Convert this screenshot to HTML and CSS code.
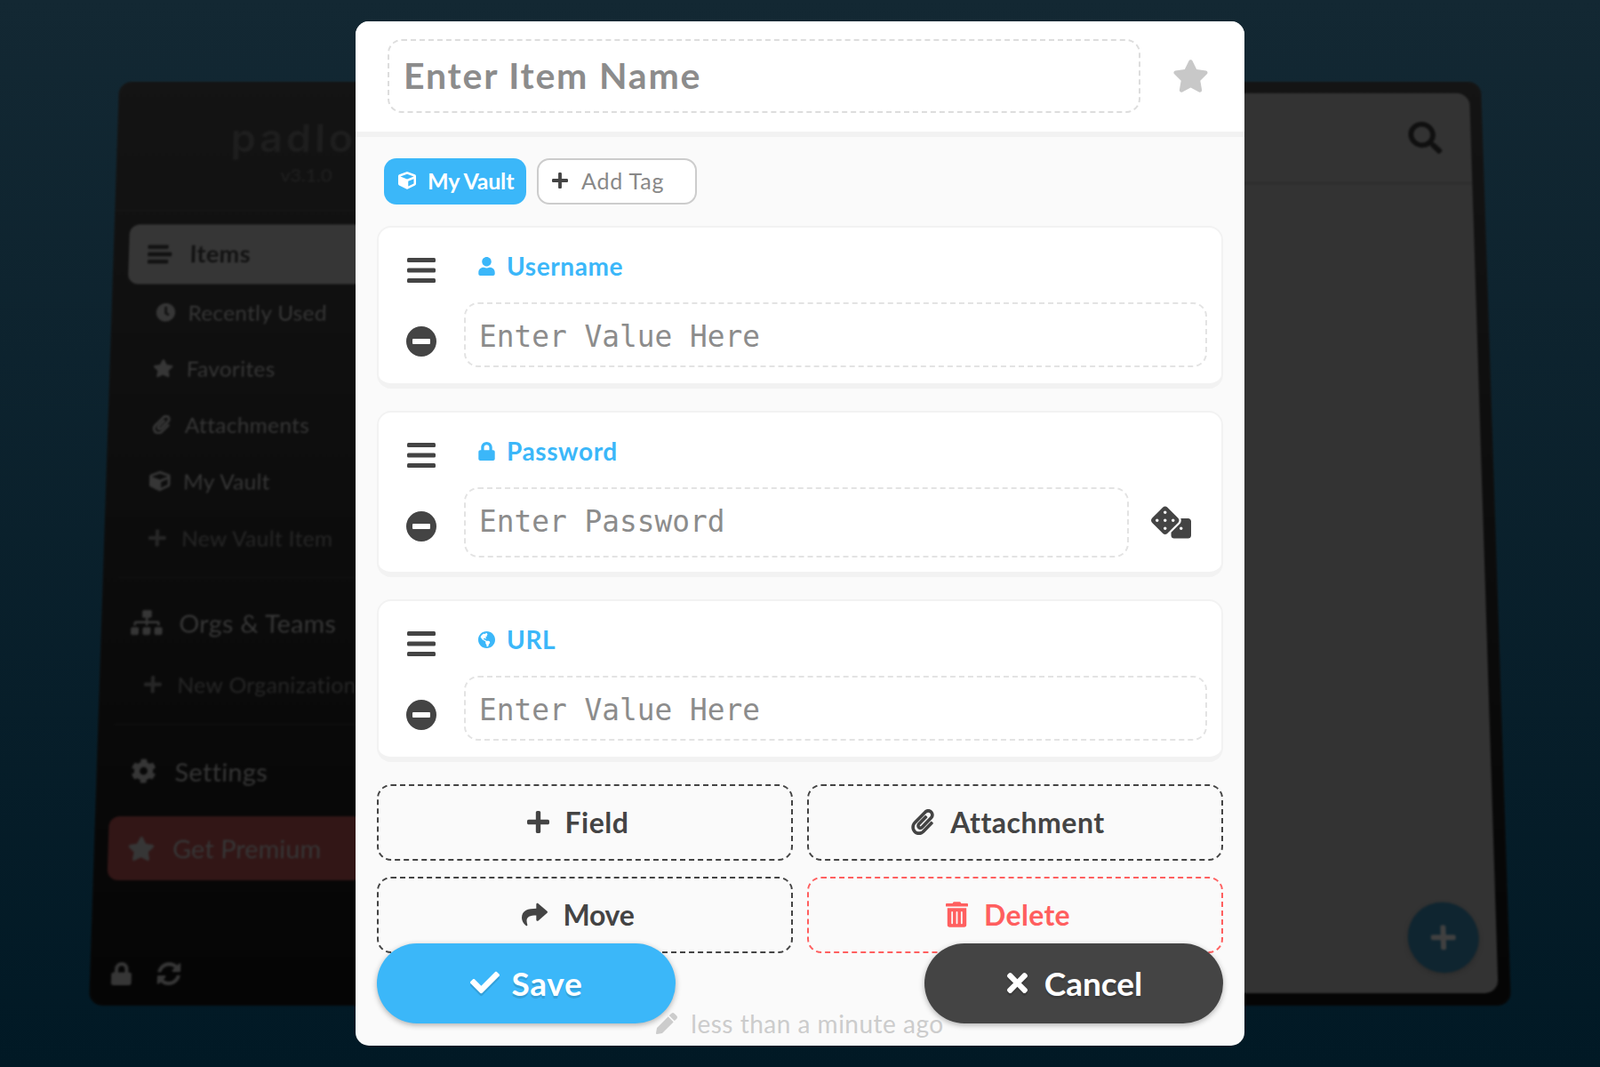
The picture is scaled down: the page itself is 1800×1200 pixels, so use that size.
FILE: index.html
```html
<!DOCTYPE html>
<html lang="en">
<head>
    <meta charset="UTF-8">
    <meta name="viewport" content="width=device-width, initial-scale=1.0">
    <title>Padloc</title>
    <link rel="stylesheet" href="styles.css">
</head>
<body>

<svg class="sprite" aria-hidden="true">
    <symbol id="i-star" viewBox="0 0 576 512"><path d="M259.3 17.8L194 150.2 47.9 171.5c-26.2 3.8-36.7 36.1-17.7 54.6l105.7 103-25 145.5c-4.5 26.3 23.2 46 46.4 33.7L288 439.6l130.7 68.7c23.2 12.2 50.9-7.4 46.4-33.7l-25-145.5 105.7-103c19-18.5 8.5-50.8-17.7-54.6L382 150.2 316.7 17.8c-11.7-23.6-45.6-23.9-57.4 0z"/></symbol>
    <symbol id="i-search" viewBox="0 0 512 512"><path d="M505 442.7L405.3 343c-4.5-4.5-10.6-7-17-7H372c27.6-35.3 44-79.7 44-128C416 93.1 322.9 0 208 0S0 93.1 0 208s93.1 208 208 208c48.3 0 92.7-16.4 128-44v16.3c0 6.4 2.5 12.5 7 17l99.7 99.7c9.4 9.4 24.6 9.4 33.9 0l28.3-28.3c9.4-9.4 9.4-24.6.1-34zM208 336c-70.7 0-128-57.2-128-128 0-70.7 57.2-128 128-128 70.7 0 128 57.2 128 128 0 70.7-57.2 128-128 128z"/></symbol>
    <symbol id="i-plus" viewBox="0 0 448 448"><path d="M416 176H272V32c0-17.67-14.33-32-32-32h-32c-17.67 0-32 14.33-32 32v144H32c-17.67 0-32 14.33-32 32v32c0 17.67 14.33 32 32 32h144v144c0 17.67 14.33 32 32 32h32c17.67 0 32-14.33 32-32V272h144c17.67 0 32-14.33 32-32v-32c0-17.67-14.33-32-32-32z"/></symbol>
    <symbol id="i-user" viewBox="0 0 448 512"><path d="M224 256c70.7 0 128-57.3 128-128S294.7 0 224 0 96 57.3 96 128s57.3 128 128 128zm89.6 32h-16.7c-22.2 10.2-46.9 16-72.9 16s-50.6-5.8-72.9-16h-16.7C60.2 288 0 348.2 0 422.4V464c0 26.5 21.5 48 48 48h352c26.5 0 48-21.5 48-48v-41.6c0-74.2-60.2-134.4-134.4-134.4z"/></symbol>
    <symbol id="i-lock" viewBox="0 0 448 512"><path d="M400 224h-24v-72C376 68.2 307.8 0 224 0S72 68.2 72 152v72H48c-26.5 0-48 21.5-48 48v192c0 26.5 21.5 48 48 48h352c26.5 0 48-21.5 48-48V272c0-26.5-21.5-48-48-48zm-104 0H152v-72c0-39.7 32.3-72 72-72s72 32.3 72 72v72z"/></symbol>
    <symbol id="i-times" viewBox="0 0 352 352"><path d="M242.72 176l100.07-100.07c12.28-12.28 12.28-32.19 0-44.48l-22.24-22.24c-12.28-12.28-32.19-12.28-44.48 0L176 109.28 75.93 9.21c-12.28-12.28-32.19-12.28-44.48 0L9.21 31.45c-12.28 12.28-12.28 32.19 0 44.48L109.28 176 9.21 276.07c-12.28 12.28-12.28 32.19 0 44.48l22.24 22.24c12.28 12.28 32.2 12.28 44.48 0L176 242.72l100.07 100.07c12.28 12.28 32.2 12.28 44.48 0l22.24-22.24c12.28-12.28 12.28-32.19 0-44.48L242.72 176z"/></symbol>
    <symbol id="i-check" viewBox="0 64 512 384"><path d="M173.898 439.404l-166.4-166.4c-9.997-9.997-9.997-26.206 0-36.204l36.203-36.204c9.997-9.998 26.207-9.998 36.204 0L192 312.69 432.095 72.596c9.997-9.997 26.207-9.997 36.204 0l36.203 36.204c9.997 9.997 9.997 26.206 0 36.204l-294.4 294.401c-9.998 9.997-26.207 9.997-36.204-.001z"/></symbol>
    <symbol id="i-share" viewBox="0 0 512 512"><path d="M503.691 189.836L327.687 37.851C312.281 24.546 288 35.347 288 56.015v80.053C127.371 137.907 0 170.1 0 322.326c0 61.441 39.581 122.309 83.333 154.132 13.653 9.931 33.111-2.533 28.077-18.631C66.066 312.814 132.917 274.316 288 272.085V360c0 20.7 24.3 31.453 39.687 18.164l176.004-152c11.071-9.562 11.086-26.753 0-36.328z"/></symbol>
    <symbol id="i-trash" viewBox="0 0 448 512"><path d="M32 464a48 48 0 0 0 48 48h288a48 48 0 0 0 48-48V128H32zm272-256a16 16 0 0 1 32 0v224a16 16 0 0 1-32 0zm-96 0a16 16 0 0 1 32 0v224a16 16 0 0 1-32 0zm-96 0a16 16 0 0 1 32 0v224a16 16 0 0 1-32 0zM432 32H312l-9.4-18.7A24 24 0 0 0 281.1 0H166.8a23.72 23.72 0 0 0-21.4 13.3L136 32H16A16 16 0 0 0 0 48v32a16 16 0 0 0 16 16h416a16 16 0 0 0 16-16V48a16 16 0 0 0-16-16z"/></symbol>
    <symbol id="i-clip" viewBox="0 0 448 512"><path d="M43.246 466.142c-58.43-60.289-57.341-157.511 1.386-217.581L254.392 34c44.316-45.332 116.351-45.336 160.671 0 43.89 44.894 43.943 117.329 0 162.276L232.214 383.128c-29.855 30.537-78.633 30.111-107.982-.998-28.275-29.97-27.368-77.473 1.452-106.953l143.743-146.835c6.182-6.314 16.312-6.422 22.626-.241l22.861 22.379c6.315 6.182 6.422 16.312.241 22.626L171.427 319.927c-4.932 5.045-5.236 13.428-.648 18.292 4.372 4.634 11.245 4.711 15.688.165l182.849-186.851c19.613-20.062 19.613-52.725-.011-72.798-19.189-19.627-49.957-19.637-69.154 0L90.39 293.295c-34.763 35.56-35.299 93.12-1.191 128.313 34.01 35.093 88.985 35.137 123.058.286l172.06-175.999c6.177-6.319 16.307-6.433 22.626-.256l22.877 22.364c6.319 6.177 6.434 16.307.256 22.626l-172.06 175.998c-59.576 60.938-155.943 60.216-214.77-.485z"/></symbol>
    <symbol id="i-cube" viewBox="0 0 512 512"><path d="M239.1 6.3l-208 78c-18.7 7-31.1 25-31.1 45v225.1c0 18.2 10.3 34.8 26.5 42.9l208 104c13.5 6.8 29.4 6.8 42.9 0l208-104c16.3-8.1 26.5-24.8 26.5-42.9V129.3c0-20-12.4-37.9-31.1-44.9l-208-78C262 2.2 250 2.2 239.1 6.3zM256 68.4l192 72v1.1l-192 78-192-78v-1.1l192-72zm32 356V275.5l160-65v133.9l-160 80z"/></symbol>
    <symbol id="i-clock" viewBox="8 8 496 496"><path d="M256,8C119,8,8,119,8,256S119,504,256,504,504,393,504,256,393,8,256,8Zm92.49,313h0l-20,25a16,16,0,0,1-22.49,2.5h0l-67-49.72a40,40,0,0,1-15-31.23V112a16,16,0,0,1,16-16h32a16,16,0,0,1,16,16V256l58,42.5A16,16,0,0,1,348.49,321Z"/></symbol>
    <symbol id="i-sitemap" viewBox="0 0 640 512"><path d="M128 352H32c-17.67 0-32 14.33-32 32v96c0 17.67 14.33 32 32 32h96c17.67 0 32-14.33 32-32v-96c0-17.67-14.33-32-32-32zm-24-80h192v48h48v-48h192v48h48v-57.59c0-21.17-17.23-38.41-38.41-38.41H344v-64h40c17.67 0 32-14.33 32-32V32c0-17.67-14.33-32-32-32H256c-17.67 0-32 14.33-32 32v96c0 17.67 14.33 32 32 32h40v64H94.41C73.23 224 56 241.23 56 262.41V320h48v-48zm264 80h-96c-17.67 0-32 14.33-32 32v96c0 17.67 14.33 32 32 32h96c17.67 0 32-14.33 32-32v-96c0-17.67-14.33-32-32-32zm240 0h-96c-17.67 0-32 14.33-32 32v96c0 17.67 14.33 32 32 32h96c17.67 0 32-14.33 32-32v-96c0-17.67-14.33-32-32-32z"/></symbol>
    <symbol id="i-cog" viewBox="14 8 484 496"><path d="M487.4 315.7l-42.6-24.6c4.3-23.2 4.3-47 0-70.2l42.6-24.6c4.9-2.8 7.1-8.6 5.5-14-11.1-35.6-30-67.8-54.7-94.6-3.8-4.1-10-5.1-14.8-2.3L380.8 110c-17.9-15.4-38.5-27.3-60.8-35.1V25.8c0-5.6-3.9-10.5-9.4-11.7-36.7-8.2-74.3-7.8-109.2 0-5.5 1.2-9.4 6.1-9.4 11.7V75c-22.2 7.9-42.8 19.8-60.8 35.1L88.7 85.5c-4.9-2.8-11-1.9-14.8 2.3-24.7 26.7-43.6 58.9-54.7 94.6-1.7 5.4.6 11.2 5.5 14L67.3 221c-4.3 23.2-4.3 47 0 70.2l-42.6 24.6c-4.9 2.8-7.1 8.6-5.5 14 11.1 35.6 30 67.8 54.7 94.6 3.8 4.1 10 5.1 14.8 2.3l42.6-24.6c17.9 15.4 38.5 27.3 60.8 35.1v49.2c0 5.6 3.9 10.5 9.4 11.7 36.7 8.2 74.3 7.8 109.2 0 5.5-1.2 9.4-6.1 9.4-11.7v-49.2c22.2-7.9 42.8-19.8 60.8-35.1l42.6 24.6c4.9 2.8 11 1.9 14.8-2.3 24.7-26.7 43.6-58.9 54.7-94.6 1.5-5.5-.7-11.3-5.6-14.1zM256 336c-44.1 0-80-35.9-80-80s35.9-80 80-80 80 35.9 80 80-35.9 80-80 80z"/></symbol>
    <symbol id="i-sync" viewBox="8 8 496 496"><path d="M370.72 133.28C339.458 104.008 298.888 87.962 255.848 88c-77.458.068-144.328 53.178-162.791 126.85-1.344 5.363-6.122 9.15-11.651 9.15H24.103c-7.498 0-13.194-6.807-11.807-14.176C33.933 94.924 134.813 8 256 8c66.448 0 126.791 26.136 171.315 68.685L463.03 40.97C478.149 25.851 504 36.559 504 57.941V192c0 13.255-10.745 24-24 24H345.941c-21.382 0-32.09-25.851-16.971-40.971l41.75-41.749zM32 296h134.059c21.382 0 32.09 25.851 16.971 40.971l-41.75 41.75c31.262 29.273 71.835 45.319 114.876 45.28 77.418-.07 144.315-53.144 162.787-126.849 1.344-5.363 6.122-9.15 11.651-9.15h57.304c7.498 0 13.194 6.807 11.807 14.176C478.067 417.076 377.187 504 256 504c-66.448 0-126.791-26.136-171.315-68.685L48.97 471.03C33.851 486.149 8 475.441 8 454.059V320c0-13.255 10.745-24 24-24z"/></symbol>
    <symbol id="i-globe" viewBox="0 8 496 496"><path d="M248 8C111.03 8 0 119.03 0 256s111.03 248 248 248 248-111.03 248-248S384.97 8 248 8zm82.29 357.6c-3.9 3.88-7.99 7.95-11.31 11.28-2.99 3-5.1 6.7-6.17 10.71-1.51 5.66-2.73 11.38-4.77 16.87l-17.39 46.85c-13.76 3-28 4.69-42.65 4.69v-27.38c1.69-12.62-7.64-36.26-22.63-51.25-6-6-9.37-14.14-9.37-22.63v-32.01c0-11.64-6.27-22.34-16.46-27.97-14.37-7.95-34.81-19.06-48.81-26.11-11.48-5.78-22.1-13.14-31.65-21.75l-.8-.72a114.792 114.792 0 0 1-18.06-20.74c-9.38-13.77-24.66-36.42-34.59-51.14 20.47-45.5 57.36-82.04 103.2-101.89l24.01 12.01C203.48 89.74 216 82.01 216 70.11v-11.3c7.99-1.29 16.12-2.11 24.39-2.42l28.3 28.3c6.25 6.25 6.25 16.38 0 22.63L264 112l-10.34 10.34c-3.12 3.12-3.12 8.19 0 11.31l4.69 4.69c3.12 3.12 3.12 8.19 0 11.31l-8 8a8.008 8.008 0 0 1-5.66 2.34h-8.99c-2.08 0-4.08.81-5.58 2.27l-9.92 9.65a8.008 8.008 0 0 0-1.58 9.31l15.59 31.19c2.66 5.32-1.21 11.58-7.15 11.58h-5.64c-1.93 0-3.79-.7-5.24-1.96l-9.28-8.06a16.017 16.017 0 0 0-15.55-3.1l-31.17 10.39a11.95 11.95 0 0 0-8.17 11.34c0 4.53 2.56 8.66 6.61 10.69l11.08 5.54c9.41 4.71 19.79 7.16 30.31 7.16s22.59 27.29 32 32h66.75c8.49 0 16.62 3.37 22.63 9.37l13.69 13.69a30.503 30.503 0 0 1 8.93 21.57 46.536 46.536 0 0 1-13.72 32.98z"/></symbol>
    <symbol id="i-dice" viewBox="0 0 640 512"><path d="M592 192H473.26c12.69 29.59 7.12 65.2-17 89.32L320 417.58V464c0 26.51 21.49 48 48 48h224c26.51 0 48-21.49 48-48V240c0-26.51-21.49-48-48-48zM480 376c-13.25 0-24-10.75-24-24 0-13.26 10.75-24 24-24s24 10.74 24 24c0 13.25-10.75 24-24 24zm-46.37-186.7L258.7 14.37c-19.16-19.16-50.23-19.16-69.39 0L14.37 189.3c-19.16 19.16-19.16 50.23 0 69.39L189.3 433.63c19.16 19.16 50.23 19.16 69.39 0L433.63 258.7c19.16-19.17 19.16-50.24 0-69.4zM96 248c-13.25 0-24-10.75-24-24 0-13.26 10.75-24 24-24s24 10.74 24 24c0 13.25-10.75 24-24 24zm128 128c-13.25 0-24-10.75-24-24 0-13.26 10.75-24 24-24s24 10.74 24 24c0 13.25-10.75 24-24 24zm0-128c-13.25 0-24-10.75-24-24 0-13.26 10.75-24 24-24s24 10.74 24 24c0 13.25-10.75 24-24 24zm0-128c-13.25 0-24-10.75-24-24 0-13.26 10.75-24 24-24s24 10.74 24 24c0 13.25-10.75 24-24 24zm128 128c-13.25 0-24-10.75-24-24 0-13.26 10.75-24 24-24s24 10.74 24 24c0 13.25-10.75 24-24 24z"/></symbol>
    <symbol id="i-pencil" viewBox="0 0 512 512"><path d="M497.9 142.1l-46.1 46.1c-4.7 4.7-12.3 4.7-17 0l-111-111c-4.7-4.7-4.7-12.3 0-17l46.1-46.1c18.7-18.7 49.1-18.7 67.9 0l60.1 60.1c18.8 18.7 18.8 49.1 0 67.9zM284.2 99.8L21.6 362.4.4 483.9c-2.9 16.4 11.4 30.6 27.8 27.8l121.5-21.3 262.6-262.6c4.7-4.7 4.7-12.3 0-17l-111-111c-4.8-4.7-12.4-4.7-17.1 0z"/></symbol>
    <symbol id="i-bars" viewBox="0 0 32 28"><rect width="32" height="5" rx="1.5"/><rect y="11.5" width="32" height="5" rx="1.5"/><rect y="23" width="32" height="5" rx="1.5"/></symbol>
    <symbol id="i-list" viewBox="0 0 28 23"><rect width="24" height="5" rx="1"/><rect y="9" width="28" height="5" rx="1"/><rect y="18" width="24" height="5" rx="1"/></symbol>
    <symbol id="i-minus" viewBox="0 0 34 34"><path fill-rule="evenodd" d="M17 0a17 17 0 1 0 0 34a17 17 0 1 0 0-34zM8 14h18a1 1 0 0 1 1 1v4a1 1 0 0 1-1 1H8a1 1 0 0 1-1-1v-4a1 1 0 0 1 1-1z"/></symbol>
</svg>

<div class="app">
    <aside class="sidebar">
        <div class="logo">
            <div class="logo-name">padloc</div>
            <div class="logo-version">v3.1.0</div>
        </div>

        <div class="nav-row nav-active">
            <svg class="ico ico-items"><use href="#i-list"/></svg>
            <span>Items</span>
        </div>
        <div class="nav-row nav-sub">
            <svg class="ico ico-clock"><use href="#i-clock"/></svg>
            <span>Recently Used</span>
        </div>
        <div class="nav-row nav-sub">
            <svg class="ico ico-fav"><use href="#i-star"/></svg>
            <span>Favorites</span>
        </div>
        <div class="nav-row nav-sub">
            <svg class="ico ico-attach"><use href="#i-clip"/></svg>
            <span>Attachments</span>
        </div>
        <div class="nav-row nav-sub">
            <svg class="ico ico-vault"><use href="#i-cube"/></svg>
            <span>My Vault</span>
        </div>
        <div class="nav-row nav-sub nav-new">
            <svg class="ico ico-new"><use href="#i-plus"/></svg>
            <span>New Vault Item</span>
        </div>

        <div class="nav-sep"></div>

        <div class="nav-row nav-main">
            <svg class="ico ico-orgs"><use href="#i-sitemap"/></svg>
            <span>Orgs &amp; Teams</span>
        </div>
        <div class="nav-row nav-sub nav-new nav-org-new">
            <svg class="ico ico-new"><use href="#i-plus"/></svg>
            <span>New Organization</span>
        </div>

        <div class="nav-sep nav-sep-2"></div>

        <div class="nav-row nav-main">
            <svg class="ico ico-cog"><use href="#i-cog"/></svg>
            <span>Settings</span>
        </div>
        <div class="nav-row nav-main nav-premium">
            <svg class="ico ico-premium"><use href="#i-star"/></svg>
            <span>Get Premium</span>
        </div>

        <div class="side-foot">
            <svg class="ico-foot-lock"><use href="#i-lock"/></svg>
            <svg class="ico-foot-sync"><use href="#i-sync"/></svg>
        </div>
    </aside>

    <main class="panel">
        <div class="panel-head">
            <svg class="ico-search"><use href="#i-search"/></svg>
        </div>
        <div class="fab">
            <svg class="ico-fab"><use href="#i-plus"/></svg>
        </div>
    </main>
</div>

<div class="dialog">
    <header class="dialog-head">
        <input class="name-input" type="text" placeholder="Enter Item Name">
        <svg class="ico-star"><use href="#i-star"/></svg>
    </header>

    <div class="tags">
        <div class="tag tag-vault">
            <svg class="tag-ico"><use href="#i-cube"/></svg>
            <span>My Vault</span>
        </div>
        <div class="tag tag-add">
            <svg class="tag-plus"><use href="#i-plus"/></svg>
            <span>Add Tag</span>
        </div>
    </div>

    <section class="field">
        <div class="field-side">
            <svg class="ico-handle"><use href="#i-bars"/></svg>
        </div>
        <div class="field-label">
            <svg class="label-ico"><use href="#i-user"/></svg>
            <span>Username</span>
        </div>
        <div class="field-side">
            <svg class="ico-remove"><use href="#i-minus"/></svg>
        </div>
        <input class="value-input" type="text" placeholder="Enter Value Here">
    </section>

    <section class="field field-password">
        <div class="field-side">
            <svg class="ico-handle"><use href="#i-bars"/></svg>
        </div>
        <div class="field-label">
            <svg class="label-ico"><use href="#i-lock"/></svg>
            <span>Password</span>
        </div>
        <div class="field-side">
            <svg class="ico-remove"><use href="#i-minus"/></svg>
        </div>
        <div class="password-row">
            <input class="value-input" type="text" placeholder="Enter Password">
            <svg class="ico-dice"><use href="#i-dice"/></svg>
        </div>
    </section>

    <section class="field">
        <div class="field-side">
            <svg class="ico-handle"><use href="#i-bars"/></svg>
        </div>
        <div class="field-label">
            <svg class="label-ico"><use href="#i-globe"/></svg>
            <span>URL</span>
        </div>
        <div class="field-side">
            <svg class="ico-remove"><use href="#i-minus"/></svg>
        </div>
        <input class="value-input" type="text" placeholder="Enter Value Here">
    </section>

    <div class="actions">
        <button class="action" type="button">
            <svg class="action-ico ico-w25"><use href="#i-plus"/></svg>Field
        </button>
        <button class="action" type="button">
            <svg class="action-ico ico-w26"><use href="#i-clip"/></svg>Attachment
        </button>
        <button class="action action-move" type="button">
            <svg class="action-ico ico-w29"><use href="#i-share"/></svg>Move
        </button>
        <button class="action action-danger" type="button">
            <svg class="action-ico ico-w25"><use href="#i-trash"/></svg>Delete
        </button>
    </div>

    <div class="updated">
        <svg class="ico-pencil"><use href="#i-pencil"/></svg>
        <span>less than a minute ago</span>
    </div>

    <footer class="dialog-foot">
        <button class="pill pill-save" type="button">
            <svg class="pill-ico pill-check"><use href="#i-check"/></svg>Save
        </button>
        <button class="pill pill-cancel" type="button">
            <svg class="pill-ico pill-times"><use href="#i-times"/></svg>Cancel
        </button>
    </footer>
</div>

</body>
</html>
```

FILE: styles.css
```css
* {
    box-sizing: border-box;
}
html, body {
    height: 100%;
}
body {
    margin: 0;
    height: 1200px;
    overflow: hidden;
    padding: 45px 100px 69px;
    font-family: 'Lato', 'Noto Sans', sans-serif;
    background: linear-gradient(#132833, #011925);
}
svg {
    display: block;
    fill: currentColor;
}
.sprite {
    width: 0;
    height: 0;
    position: absolute;
}

/* window behind the dialog, tilted away */
.app {
    display: flex;
    height: 1086px;
    border-radius: 15px;
    overflow: hidden;
    background: linear-gradient(#141414, #050505);
    transform-origin: 50% 100%;
    transform: perspective(1000px) rotateX(2.34deg);
    filter: blur(0.8px);
}
.sidebar {
    width: 445px;
    flex: none;
    display: flex;
    flex-direction: column;
    color: #363636;
}
.logo {
    height: 157px;
    padding-top: 34px;
    text-align: center;
    border-bottom: 1px solid #181818;
}
.logo-name {
    font-family: 'Inter', sans-serif;
    font-size: 47px;
    line-height: 70px;
    letter-spacing: 4px;
    font-weight: 600;
    color: #1e1e1e;
}
.logo-version {
    font-size: 22px;
    line-height: 26px;
    margin-top: -3px;
    color: #202020;
}
.nav-row {
    display: flex;
    align-items: center;
    flex: none;
    height: 67px;
    margin-left: 18px;
    font-size: 25px;
    letter-spacing: 0.4px;
    position: relative;
    padding-left: 71px;
}
.nav-row .ico {
    position: absolute;
    top: 50%;
    transform: translateY(-50%);
}
.nav-active {
    height: 72px;
    margin-top: 17px;
    padding-bottom: 3px;
    border-radius: 12px 0 0 12px;
    background: #363636;
    color: #121212;
    font-size: 28px;
    font-weight: 700;
}
.nav-new {
    color: #262626;
}
.nav-main {
    font-size: 29px;
    height: 72px;
}
.nav-org-new {
    margin-top: 2px;
}
.nav-sep {
    height: 1px;
    flex: none;
    background: #111;
    margin: 13px 0 16px 18px;
}
.nav-sep-2 {
    margin: 13px 0 17px 18px;
}
.nav-premium {
    height: 73px;
    margin-left: 16px;
    margin-top: 16px;
    padding-left: 73px;
    letter-spacing: 0.1px;
    background: #321616;
    border-radius: 12px 0 0 12px;
}
.ico-items { left: 22px; width: 28px; height: 23px; }
.ico-clock { left: 34px; width: 22px; height: 22px; }
.ico-fav { left: 32px; width: 24px; height: 22px; }
.ico-attach { left: 34px; width: 20px; height: 23px; }
.ico-vault { left: 32px; width: 24px; height: 24px; }
.ico-new { left: 33px; width: 20px; height: 20px; }
.ico-orgs { left: 16px; width: 36px; height: 30px; }
.ico-cog { left: 22px; width: 27px; height: 28px; }
.ico-premium { left: 22px; width: 31px; height: 29px; }
.side-foot {
    margin-top: auto;
    padding: 0 0 23px 24px;
    display: flex;
    align-items: center;
    gap: 29px;
}
.ico-foot-lock { width: 23px; height: 26px; }
.ico-foot-sync { width: 26px; height: 26px; }

.panel {
    flex: 1;
    margin: 14px;
    background: #333;
    border-radius: 15px;
    position: relative;
}
.panel-head {
    height: 112px;
    border-bottom: 4px solid #2f2f2f;
    display: flex;
    align-items: center;
    justify-content: flex-end;
    padding: 0 34px 0 0;
}
.ico-search {
    width: 39px;
    height: 39px;
    color: #101010;
}
.fab {
    position: absolute;
    right: 20px;
    bottom: 23px;
    width: 80px;
    height: 80px;
    border-radius: 50%;
    background: #0f2530;
    box-shadow: 0 2px 6px rgba(0, 0, 0, 0.2);
    display: flex;
    align-items: center;
    justify-content: center;
    color: #404040;
}
.ico-fab {
    width: 28px;
    height: 28px;
}

/* dialog */
.dialog {
    position: absolute;
    left: 400px;
    top: 24px;
    width: 1000px;
    height: 1152px;
    border-radius: 15px;
    background: #fafafa;
    overflow: hidden;
    color: #444;
}
.dialog-head {
    height: 130px;
    background: #fff;
    border-bottom: 6px solid #f2f2f2;
    padding: 20px 40px 0 36px;
    display: flex;
    align-items: flex-start;
    justify-content: space-between;
}
.name-input {
    width: 847px;
    height: 83px;
    border: 2px dashed #ddd;
    border-radius: 16px;
    padding: 0 16px 2px;
    font-family: inherit;
    font-size: 41px;
    font-weight: 700;
    letter-spacing: 1.8px;
    background: none;
    outline: none;
}
.name-input::placeholder {
    color: #8c8c8c;
    opacity: 1;
}
.ico-star {
    width: 41px;
    height: 39px;
    margin-top: 22px;
    color: #c8c8c8;
}
.tags {
    display: flex;
    gap: 12px;
    margin: 24px 0 24px 32px;
}
.tag {
    height: 52px;
    border-radius: 14px;
    display: flex;
    align-items: center;
    font-size: 25px;
    padding-bottom: 2px;
}
.tag-vault {
    width: 160px;
    background: #3bb7f9;
    color: #fff;
    font-weight: 700;
    letter-spacing: -0.2px;
    padding-left: 16px;
    gap: 13px;
}
.tag-ico {
    width: 20px;
    height: 20px;
}
.tag-add {
    width: 180px;
    background: #fff;
    border: 2px solid #ccc;
    color: #888;
    letter-spacing: 0.8px;
    padding-left: 15px;
    gap: 15px;
}
.tag-plus {
    width: 18px;
    height: 18px;
    color: #444;
}
.field {
    display: grid;
    grid-template-columns: 96px 1fr;
    grid-template-rows: 84px auto;
    width: 952px;
    margin: 0 0 25px 24px;
    padding: 0 16px 18px 0;
    background: #fff;
    border: 2px solid #f2f2f2;
    border-bottom-width: 6px;
    border-radius: 16px;
}
.field-password {
    padding-bottom: 16px;
}
.field-side {
    display: flex;
    justify-content: center;
    align-items: flex-start;
}
.ico-handle {
    width: 32px;
    height: 28px;
    margin-top: 34px;
}
.ico-remove {
    width: 34px;
    height: 34px;
    margin-top: 27px;
}
.field-label {
    display: flex;
    align-items: center;
    height: 34px;
    margin-top: 26px;
    padding-left: 16px;
    gap: 13px;
    color: #3bb7f9;
    font-size: 28px;
    font-weight: 700;
    letter-spacing: 0.6px;
}
.label-ico {
    width: 19px;
    height: 21px;
}
.value-input {
    width: 100%;
    height: 73px;
    display: block;
    border: 2px dashed #e3e3e3;
    border-radius: 16px;
    padding: 4px 15px 0;
    background: none;
    outline: none;
    font-family: 'DejaVu Sans Mono', monospace;
    font-size: 32.8px;
}
.value-input::placeholder {
    color: #8c8c8c;
    opacity: 1;
}
.password-row {
    display: flex;
    align-items: flex-start;
    gap: 25px;
    padding-right: 18px;
}
.password-row .value-input {
    flex: 1;
    width: auto;
    min-width: 0;
    height: 79px;
    padding: 0 15px 1px;
}
.ico-dice {
    width: 45px;
    height: 37px;
    margin-top: 21px;
    flex: none;
}
.actions {
    display: grid;
    grid-template-columns: 1fr 1fr;
    gap: 18px 16px;
    width: 952px;
    margin-left: 24px;
}
.action {
    height: 86px;
    display: flex;
    align-items: center;
    justify-content: center;
    gap: 18px;
    padding: 0 16px 2px 0;
    border: 2px dashed #444;
    border-radius: 16px;
    background: none;
    color: #444;
    font-family: inherit;
    font-size: 32px;
    font-weight: 700;
    letter-spacing: 0.5px;
}
.action-move {
    letter-spacing: -0.3px;
}
.action-danger {
    border-color: #ff5f5f;
    color: #ff5f5f;
    letter-spacing: 0.3px;
}
.action-ico {
    height: 29px;
}
.ico-w25 { width: 25px; }
.ico-w26 { width: 26px; }
.ico-w29 { width: 29px; }
.updated {
    display: flex;
    align-items: center;
    justify-content: center;
    gap: 15px;
    margin-top: 62px;
    height: 34px;
    font-size: 28px;
    letter-spacing: 0.5px;
    color: #ccc;
}
.ico-pencil {
    width: 24px;
    height: 24px;
}
/* save / cancel float over the actions */
.dialog-foot {
    position: absolute;
    left: 24px;
    right: 24px;
    top: 1037px;
    display: flex;
    justify-content: space-between;
}
.pill {
    width: 336px;
    height: 90px;
    border: none;
    border-radius: 45px;
    display: flex;
    align-items: center;
    justify-content: center;
    gap: 14px;
    padding: 0 0 2px;
    color: #fff;
    font-family: inherit;
    font-size: 37px;
    font-weight: 700;
    text-shadow: 0 3px 0 rgba(0, 0, 0, 0.12);
    box-shadow: 0 2px 6px rgba(0, 0, 0, 0.3);
}
.pill-save {
    background: #3bb7f9;
    letter-spacing: 0.7px;
}
.pill-cancel {
    background: #444;
    gap: 19px;
    padding-left: 2px;
}
.pill-ico {
    filter: drop-shadow(0 3px 0 rgba(0, 0, 0, 0.12));
}
.pill-check {
    width: 33px;
    height: 26px;
}
.pill-times {
    width: 23px;
    height: 23px;
}
```
